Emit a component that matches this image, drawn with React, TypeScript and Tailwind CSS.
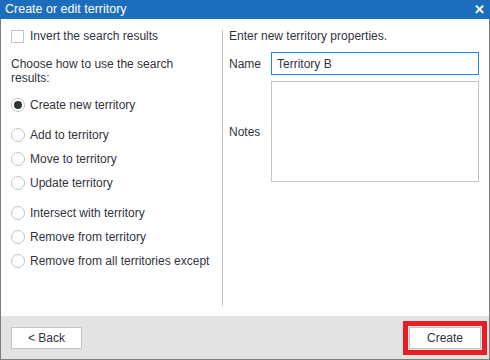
import React from 'react';

const radios = [
  ['Create new territory', true],
  ['Add to territory', false],
  ['Move to territory', false],
  ['Update territory', false],
  ['Intersect with territory', false],
  ['Remove from territory', false],
  ['Remove from all territories except', false],
] as const;

function Radio({ label, checked, className }: { label: string; checked: boolean; className?: string }) {
  return (
    <div className={`flex items-center h-[14px] ${className ?? ''}`}>
      <span className="w-[14px] h-[14px] rounded-full border border-[#c4c4c4] bg-white flex items-center justify-center">
        {checked && <span className="w-[8px] h-[8px] rounded-full bg-[#333]" />}
      </span>
      <span className="ml-[5px]">{label}</span>
    </div>
  );
}

export default function App() {
  return (
    <div
      className="w-[490px] h-[360px] flex flex-col border border-[#7c7c7c] border-t-0 bg-white text-[12px] text-[#333340]"
      style={{ fontFamily: '"Liberation Sans", Arial, sans-serif' }}
    >
      <div className="h-[19px] bg-[#1c6ebd] text-white flex items-center justify-between pl-[5px] pr-[5px] -mx-px">
        <span className="text-[12.5px]">Create or edit territory</span>
        <span className="font-bold text-[13px] leading-none">✕</span>
      </div>

      <div className="flex-1 flex pt-[10px]">
        <div className="w-[221px] pl-[10px]">
          <div className="flex items-center h-[14px]">
            <span className="w-[13px] h-[13px] border border-[#c4c4c4] bg-white" />
            <span className="ml-[6px]">Invert the search results</span>
          </div>
          <p className="mt-[14px] leading-[14px] w-[190px]">Choose how to use the search results:</p>
          <Radio label={radios[0][0]} checked className="mt-[13px]" />
          <Radio label={radios[1][0]} checked={false} className="mt-[16px]" />
          <Radio label={radios[2][0]} checked={false} className="mt-[10px]" />
          <Radio label={radios[3][0]} checked={false} className="mt-[10px]" />
          <Radio label={radios[4][0]} checked={false} className="mt-[16px]" />
          <Radio label={radios[5][0]} checked={false} className="mt-[10px]" />
          <Radio label={radios[6][0]} checked={false} className="mt-[10px]" />
        </div>
        <div className="w-px bg-[#c4c4c4] mt-[1px] mb-[10px]" />
        <div className="flex-1 pl-[6px] pr-[10px]">
          <p className="leading-[14px]">Enter new territory properties.</p>
          <div className="flex items-center mt-[9px]">
            <span className="w-[42px]">Name</span>
            <div className="flex-1 h-[23px] border border-[#1e88e5] flex items-center pl-[5px]">Territory B</div>
          </div>
          <div className="flex items-center mt-[6px]">
            <span className="w-[42px]">Notes</span>
            <div className="flex-1 h-[101px] border border-[#c4c4c4]" />
          </div>
        </div>
      </div>

      <div className="h-[43px] bg-[#e3e3e3] flex items-center justify-between pl-[10px] pr-[2px]">
        <button className="w-[71px] h-[22px] bg-white border border-[#c4c4c4]">&lt; Back</button>
        <div className="border-[5px] border-[#e81e25] p-[1px] bg-[#e3e3e3]">
          <button className="w-[72px] h-[22px] bg-white border border-[#c4c4c4] block">Create</button>
        </div>
      </div>
    </div>
  );
}
